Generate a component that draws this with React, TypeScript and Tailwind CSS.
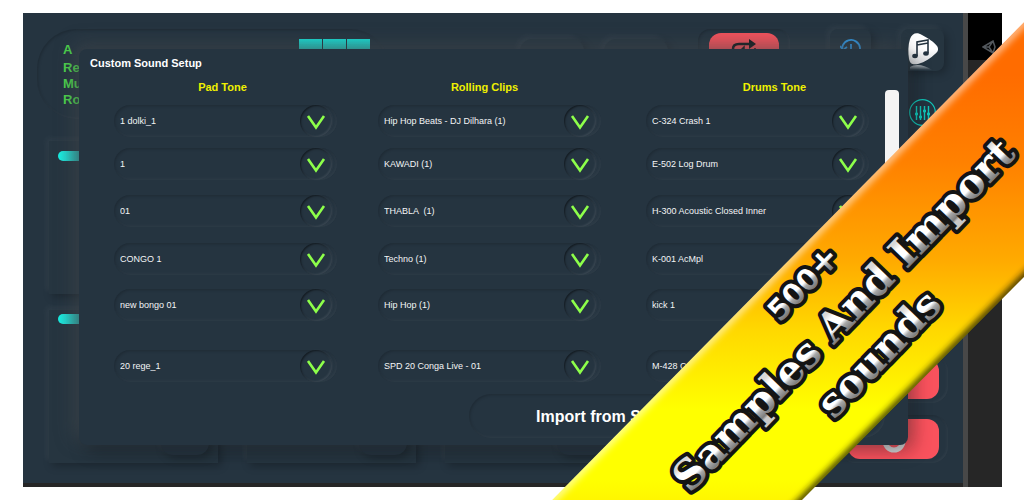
import React, { useState } from 'react';

interface ToneRow {
  label: string;
  spacing: string;
}

interface ToneColumn {
  title: string;
  titleClass: string;
  columnClass: string;
  tones: string[];
}

const COLUMNS: ToneColumn[] = [
  {
    title: 'Pad Tone',
    titleClass: 'pr-1.5',
    columnClass: 'pr-[41px]',
    tones: ['1 dolki_1', '1', '01', 'CONGO 1', 'new bongo 01', '20 rege_1'],
  },
  {
    title: 'Rolling Clips',
    titleClass: 'pr-2.5',
    columnClass: 'pr-[45px]',
    tones: [
      'Hip Hop Beats - DJ Dilhara (1)',
      'KAWADI (1)',
      'THABLA \u00a0(1)',
      'Techno (1)',
      'Hip Hop (1)',
      'SPD 20 Conga Live - 01',
    ],
  },
  {
    title: 'Drums Tone',
    titleClass: 'pl-[34px]',
    columnClass: '',
    tones: [
      'C-324 Crash 1',
      'E-502 Log Drum',
      'H-300 Acoustic Closed Inner',
      'K-001 AcMpl',
      'kick 1',
      'M-428 C',
    ],
  },
];

const ROW_SPACING = ['mt-2.5', 'mt-[11px]', 'mt-[15px]', 'mt-4', 'mt-[14px]', 'mt-[29px]'];

const RAISED =
  'shadow-[-3px_-3px_6px_rgba(255,255,255,0.05),3px_3px_8px_rgba(0,0,0,0.25)]';
const SUNKEN =
  'shadow-[inset_1px_1px_3px_rgba(0,0,0,0.2),inset_-1px_-1px_3px_rgba(255,255,255,0.06)]';

const ToneSelect: React.FC<ToneRow & { name: string }> = ({ label, spacing, name }) => {
  const [value, setValue] = useState(label);

  return (
    <div className={`relative h-8 ${spacing}`}>
      <select
        aria-label={name}
        value={value}
        onChange={(e) => setValue(e.target.value)}
        className={`block h-full w-full appearance-none rounded-full bg-[#253440] pl-1.5 pr-10 pt-0.5 text-[9px] text-gray-100 outline-none ${SUNKEN}`}
      >
        <option value={label}>{label}</option>
      </select>
      <span className="pointer-events-none absolute right-[5px] top-0 flex h-8 w-8 items-center justify-center rounded-full bg-[#253440] pt-px shadow-[inset_1px_1px_2px_rgba(0,0,0,0.5),inset_-1px_-1px_2px_rgba(255,255,255,0.1),1px_0_2px_rgba(255,255,255,0.04)]">
        <svg width="20" height="16" viewBox="0 0 20 16" fill="none" stroke="#8dff4a" strokeWidth="2.6">
          <path d="M2 2l8 11.500L18 2" />
        </svg>
      </span>
    </div>
  );
};

const MusicTile: React.FC = () => (
  <button
    aria-label="Music library"
    className={`flex h-[42px] w-full items-start justify-center rounded-lg bg-[#263540] ${RAISED}`}
  >
    <svg width="43" height="42" viewBox="0 0 43 42">
      <defs>
        <linearGradient id="tile" x1="0" y1="0" x2="0" y2="1">
          <stop offset="0.5" stopColor="#fff" />
          <stop offset="1" stopColor="#d5d7da" />
        </linearGradient>
        <linearGradient id="mirror" x1="0" y1="0" x2="0" y2="1">
          <stop offset="0" stopColor="#a9b0b6" />
          <stop offset="1" stopColor="#a9b0b6" stopOpacity="0" />
        </linearGradient>
      </defs>
      <path
        d="M8 30C7 24 7 16 9 10C11 4 16 3 21 6C27 9 33 13 36 17C38 20 37 23 34 25C30 29 24 33 17 35C12 36 9 35 8 30Z"
        fill="url(#tile)"
      />
      <path d="M9 38C14 35 22 35 31 41H9Z" fill="url(#mirror)" />
      <path d="M16 27V13L27 11V24M16 16L27 14" fill="none" stroke="#253440" strokeWidth="1.6" />
      <ellipse cx="14" cy="27" rx="2.800" ry="2.200" fill="#253440" />
      <ellipse cx="25" cy="24.500" rx="2.800" ry="2.200" fill="#253440" />
    </svg>
  </button>
);

const Mixer: React.FC = () => (
  <button aria-label="Mixer" className="mx-auto mt-7 block size-[27px] rounded-full">
    <svg width="27" height="27" viewBox="0 0 27 27" fill="none" stroke="#10c5b8">
      <circle cx="13.500" cy="13.500" r="12.800" strokeWidth="1.200" />
      <path d="M7.500 7v14M11.500 7v14M15.500 7v14M19.500 7v14" strokeWidth="1.400" />
      <path d="M6 15h3M10 18h3M14 12h3M18 15h3" strokeWidth="2.500" />
    </svg>
  </button>
);

const TopBar: React.FC = () => (
  <header className="flex items-start pl-3.5 pr-[19px] pt-4">
    <div
      className={`mr-auto flex h-[90px] w-[353px] items-start justify-between rounded-[40px] pl-[26px] pr-5 ${SUNKEN}`}
    >
      <div className="pt-[13px] text-[13px] font-bold leading-4 text-[#4bd14b]">
        <p className="mb-0.5">A</p>
        <p>Re</p>
        <p>Mu</p>
        <p>Ro</p>
      </div>
      <div className="mt-2.5 flex gap-px">
        <span className="h-4 w-[23px] bg-linear-to-b from-[#17ded6] to-[#25b8b0]" />
        <span className="h-4 w-[23px] bg-linear-to-b from-[#17ded6] to-[#25b8b0]" />
        <span className="h-4 w-[23px] bg-linear-to-b from-[#17ded6] to-[#25b8b0]" />
      </div>
    </div>
    <button aria-label="Previous" className={`mt-2.5 h-10 w-16 rounded-xl bg-[#263540] ${RAISED}`} />
    <button aria-label="Next" className={`ml-5 mt-2.5 h-10 w-16 rounded-xl bg-[#263540] ${RAISED}`} />
    <div className={`ml-[30px] w-[92px] rounded-xl px-[11px] pt-1 ${SUNKEN}`}>
      <button
        aria-label="Loop"
        className="flex h-9 w-full justify-center rounded-xl bg-[#f4525c] pt-[5px]"
      >
        <svg width="28" height="24" viewBox="0 0 28 24" fill="none" stroke="#151a1e" strokeWidth="2.500">
          <path d="M3 15V11Q3 6 9 6H20" />
          <path d="M19 1l7 5-7 5z" fill="#151a1e" stroke="none" />
          <path d="M14 18V9l-3 3M25 10v5q0 3-4 3" strokeWidth="1.500" />
        </svg>
      </button>
    </div>
    <button
      aria-label="History"
      className={`ml-10 flex h-[42px] w-[41px] justify-center rounded-lg bg-[#263540] pt-[9px] ${RAISED}`}
    >
      <svg width="22" height="22" viewBox="0 0 22 22" fill="none" stroke="#2f95e0" strokeWidth="1.800">
        <path d="M3 15A9 9 0 1 1 11 20M11 6v6l4 2" />
        <path d="M0 8l3 4 4-3" />
      </svg>
    </button>
    <div className="ml-[30px] w-[43px]">
      <MusicTile />
      <Mixer />
    </div>
  </header>
);

const Channel: React.FC<{ lower?: boolean }> = ({ lower }) => (
  <div
    className={`flex h-[153px] w-[169px] flex-col justify-between bg-[#263540] px-[9px] pb-2 ${lower ? 'pt-1' : 'pt-2.5'} ${RAISED}`}
  >
    <span className="block h-2.5 w-10 rounded-full bg-linear-to-r from-[#14f0e4] to-[#2a6f74]" />
    <span className={`block h-10 w-12 self-end rounded-xl bg-[#253440] ${RAISED}`} />
  </div>
);

const Mixboard: React.FC = () => (
  <div className="flex justify-between pb-5 pl-[26px] pr-[15px] pt-[15px]">
    <div className="grid grid-cols-[repeat(3,169px)] gap-x-[29px] gap-y-4">
      {[0, 1, 2, 3, 4, 5].map((n) => (
        <Channel key={n} lower={n > 2} />
      ))}
    </div>
    <div className="flex w-[109px] flex-col justify-end gap-3">
      <div className={`rounded-2xl px-[9px] py-1 ${SUNKEN}`}>
        <button aria-label="Play" className="block h-10 w-full rounded-xl bg-[#f9525d]" />
      </div>
      <div className={`rounded-2xl px-[9px] py-1 ${SUNKEN}`}>
        <button aria-label="Record" className="flex h-10 w-full justify-center rounded-xl bg-[#f9525d] pt-2">
          <svg width="28" height="28" viewBox="0 0 28 28" fill="none" stroke="#d9dadb" strokeWidth="5">
            <circle cx="14" cy="14" r="9" />
          </svg>
        </button>
      </div>
    </div>
  </div>
);

const SoundSetup: React.FC = () => (
  <section
    role="dialog"
    aria-labelledby="setup-title"
    className="absolute left-14 right-[94px] top-9 rounded-lg bg-[#253440] pb-[7px] shadow-[-5px_-5px_18px_rgba(75,80,84,0.5),6px_6px_18px_rgba(0,0,0,0.3)]"
  >
    <h1 id="setup-title" className="pl-[11px] pt-1.5 text-[11px] font-bold leading-4 text-white">
      Custom Sound Setup
    </h1>
    <div className="mt-2 flex pl-[35px] pr-[9px]">
      <div className="grid flex-1 grid-cols-[264fr_268fr_223fr]">
        {COLUMNS.map((column) => (
          <div key={column.title} className={column.columnClass}>
            <h2 className={`text-center text-[11px] font-bold leading-4 text-[#f0f000] ${column.titleClass}`}>
              {column.title}
            </h2>
            {column.tones.map((tone, i) => (
              <ToneSelect
                key={tone}
                name={`${column.title} ${i + 1}`}
                label={tone}
                spacing={ROW_SPACING[i]}
              />
            ))}
          </div>
        ))}
      </div>
      <div className="ml-4 mt-[11px] w-3.5 rounded bg-[#f4f4f4]" />
    </div>
    <div className="pl-[390px] pr-[23px] pt-3">
      <button
        className={`block h-11 w-full rounded-full pl-[67px] pt-0.5 text-left text-base font-bold text-white ${SUNKEN}`}
      >
        Import from Storage
      </button>
    </div>
  </section>
);

const Ribbon: React.FC = () => (
  <svg
    viewBox="0 0 1024 500"
    preserveAspectRatio="xMaxYMin slice"
    className="pointer-events-none absolute inset-0 h-full w-full"
  >
    <defs>
      <linearGradient id="sun" x1="0" y1="0" x2="0" y2="500" gradientUnits="userSpaceOnUse">
        <stop offset="0.15" stopColor="#ff6c00" />
        <stop offset="0.32" stopColor="#ff8000" />
        <stop offset="0.52" stopColor="#ffaa00" />
        <stop offset="0.66" stopColor="#ffd800" />
        <stop offset="0.82" stopColor="#ffff00" />
        <stop offset="0.96" stopColor="#ffff00" />
        <stop offset="1" stopColor="#fff600" />
      </linearGradient>
      {/* metal sheen, from cap height down to the baseline */}
      <linearGradient id="chrome" x1="0" y1="-30" x2="0" y2="2" gradientUnits="userSpaceOnUse">
        <stop offset="0.1" stopColor="#d8d8d8" />
        <stop offset="0.3" stopColor="#ffffff" />
        <stop offset="0.6" stopColor="#ffffff" />
        <stop offset="0.72" stopColor="#a8a8a8" />
        <stop offset="0.92" stopColor="#7c7c7c" />
        <stop offset="1" stopColor="#c8c8c8" />
      </linearGradient>
      <filter id="soft" x="-10%" y="-10%" width="120%" height="120%">
        <feGaussianBlur stdDeviation="3" />
      </filter>
      <clipPath id="band">
        <path d="M1024 22L552 500H802L1024 277Z" />
      </clipPath>
    </defs>
    <g clipPath="url(#band)">
      <path d="M1024 22L552 500H802L1024 277Z" fill="url(#sun)" />
      <path d="M1034 12L542 510" stroke="#ffffff" strokeOpacity="0.5" strokeWidth="9" filter="url(#soft)" />
      <path d="M1034 267L792 510" stroke="#2a2400" strokeOpacity="0.9" strokeWidth="7" filter="url(#soft)" />
    </g>
    <g
      fill="url(#chrome)"
      stroke="#141414"
      strokeWidth="8"
      strokeLinejoin="round"
      className="font-['DejaVu_Serif',serif] font-bold [paint-order:stroke]"
    >
      <text transform="translate(780 323) rotate(-46)" fontSize="29" className="font-['DejaVu_Sans',sans-serif]">
        500<tspan fontSize="34">+</tspan>
      </text>
      <text transform="translate(690 494) rotate(-46)" fontSize="41">
        Samples And Import
      </text>
      <text transform="translate(834 420) rotate(-46)" fontSize="40">
        sounds
      </text>
    </g>
  </svg>
);

export default function App() {
  return (
    <div className="relative flex min-h-screen overflow-hidden bg-white py-[13px] pl-[23px] pr-[22px] font-['Liberation_Sans',Arial,sans-serif]">
      <main className="relative flex flex-1 bg-[#262626]">
        <div className="mb-1 flex-1 overflow-hidden bg-[#253440]">
          <TopBar />
          <Mixboard />
        </div>
        <div className="w-[5px] bg-[#484848]" />
        <aside className="w-[34px]">
          <div className="flex h-[47px] items-end justify-center bg-black pb-1.5 pl-2">
            <svg width="14" height="14" viewBox="0 0 14 14" fill="none" stroke="#52575c" strokeWidth="1.500">
              <path d="M1 7L11 1l2 6-2 6zM1 7h6l4-6M7 7l4 6" />
            </svg>
          </div>
        </aside>
        <SoundSetup />
      </main>
      <Ribbon />
    </div>
  );
}
